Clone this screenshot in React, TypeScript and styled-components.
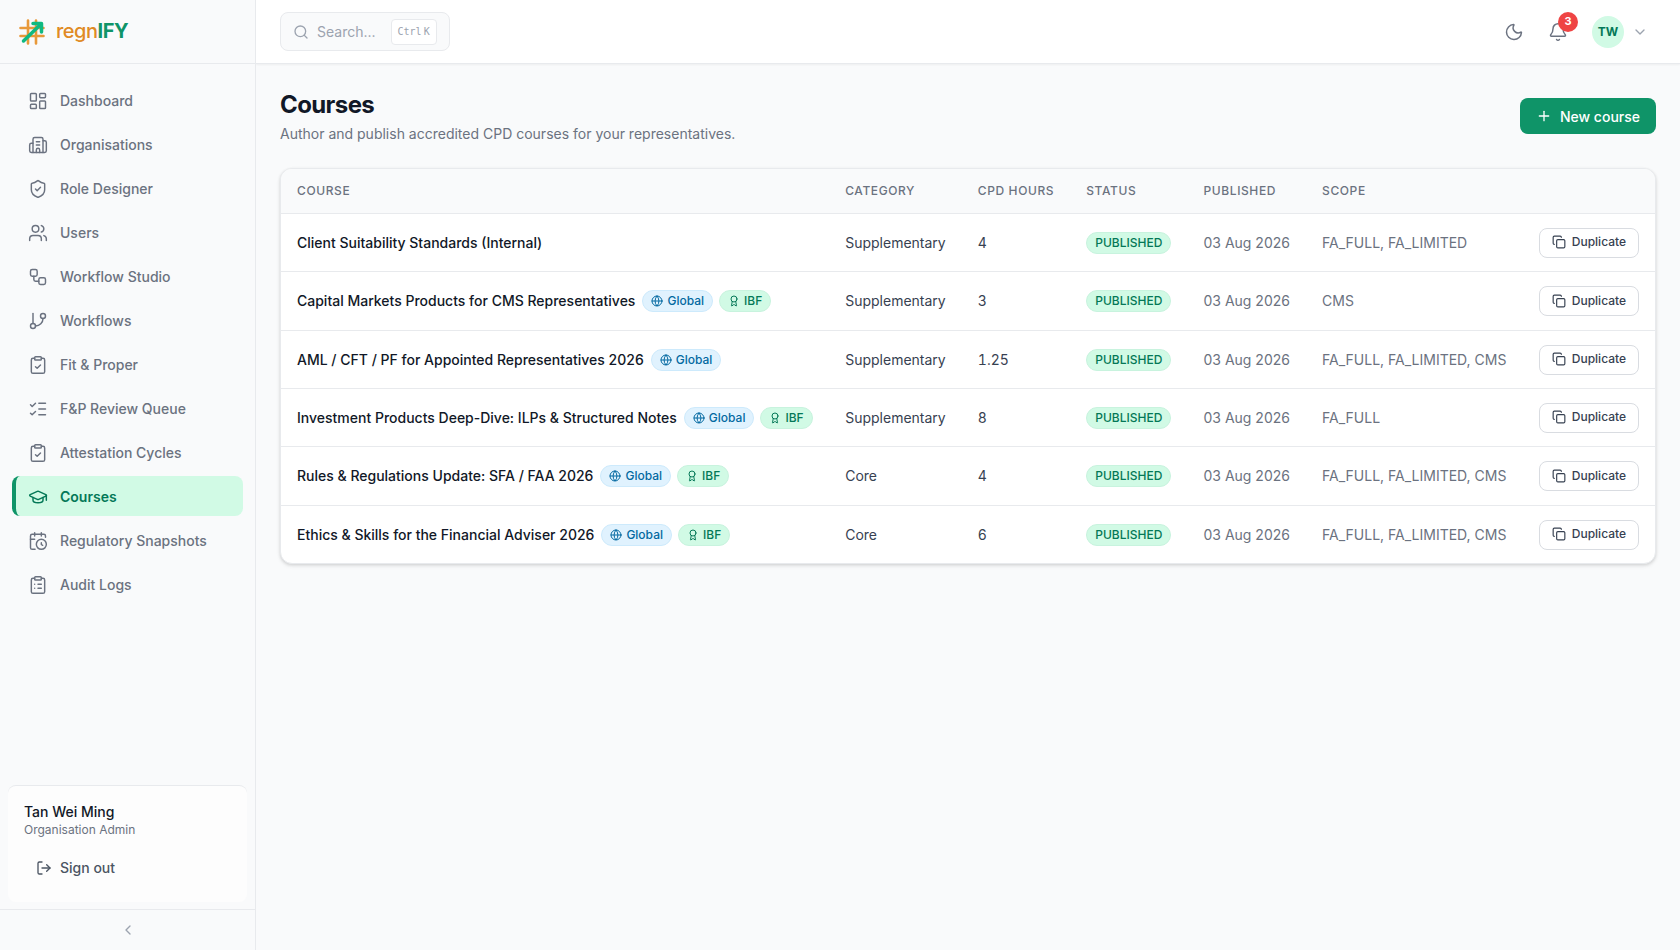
import React from "react";
import styled, { createGlobalStyle, css } from "styled-components";
import {
  Award,
  Bell,
  Building2,
  CalendarClock,
  ChevronDown,
  ChevronLeft,
  ClipboardCheck,
  ClipboardList,
  Copy,
  GitBranch,
  Globe,
  GraduationCap,
  LayoutDashboard,
  ListChecks,
  LogOut,
  Moon,
  Plus,
  Search,
  ShieldCheck,
  Users,
  Workflow,
  type LucideIcon,
} from "lucide-react";

const color = {
  page: "#f9fafb",
  surface: "#ffffff",
  line: "#e8eaed",
  lineStrong: "#d9dce1",
  ink: "#111827",
  body: "#374151",
  muted: "#6b7280",
  faint: "#9ca3af",
  brand: "#0f9468",
  brandDark: "#047857",
  brandSoft: "#d1fae5",
  amber: "#e08a24",
};

const GlobalStyle = createGlobalStyle`
  *, *::before, *::after { box-sizing: border-box; }
  body {
    margin: 0;
    background: ${color.page};
    color: ${color.ink};
    font-family: Inter, "Liberation Sans", sans-serif;
    font-size: 14px;
    line-height: 20px;
  }
  button { font: inherit; cursor: pointer; }
  h1, p { margin: 0; }
`;

const Shell = styled.div`
  display: grid;
  grid-template-columns: 256px minmax(0, 1fr);
  min-height: 100vh;
`;

const Sidebar = styled.aside`
  display: flex;
  flex-direction: column;
  position: sticky;
  top: 0;
  height: 100vh;
  border-right: 1px solid ${color.line};
  background: ${color.page};
`;

const Brand = styled.a`
  display: flex;
  align-items: center;
  gap: 8px;
  height: 64px;
  padding: 0 16px;
  border-bottom: 1px solid ${color.line};
  color: ${color.amber};
  font-size: 20px;
  font-weight: 500;
  line-height: 29px;
  letter-spacing: -0.025em;
  text-decoration: none;
`;

const BrandStrong = styled.span`
  color: ${color.brand};
  font-weight: 700;
`;

const Nav = styled.nav`
  display: flex;
  flex: 1;
  flex-direction: column;
  gap: 4px;
  padding: 16px 12px;
  overflow-y: auto;
`;

const NavLink = styled.a<{ $active: boolean }>`
  display: flex;
  align-items: center;
  gap: 12px;
  height: 40px;
  flex-shrink: 0;
  padding: 1px 12px 0;
  border-left: 4px solid transparent;
  border-radius: 8px;
  color: ${color.muted};
  font-weight: 500;
  line-height: 21px;
  text-decoration: none;
  ${({ $active }) =>
    $active &&
    css`
      border-left-color: ${color.brand};
      background: ${color.brandSoft};
      color: ${color.brandDark};
      font-weight: 600;
    `}
`;

const UserCard = styled.section`
  margin: 8px 8px 7px;
  padding: 16px;
  border-top: 1px solid ${color.line};
  border-radius: 8px;
  background: #fdfdfd;
`;

const UserName = styled.p`
  font-weight: 500;
`;

const UserRole = styled.p`
  color: ${color.muted};
  font-size: 12px;
  line-height: 16px;
`;

const SignOut = styled.button`
  display: flex;
  align-items: center;
  gap: 8px;
  width: 100%;
  height: 36px;
  margin-top: 12px;
  padding: 0 12px;
  border: 0;
  border-radius: 8px;
  background: transparent;
  color: #4b5563;
  font-weight: 500;
`;

const Collapse = styled.button`
  display: flex;
  align-items: center;
  justify-content: center;
  height: 41px;
  border: 0;
  border-top: 1px solid ${color.line};
  background: transparent;
  color: ${color.faint};
`;

const TopBar = styled.header`
  display: flex;
  align-items: center;
  justify-content: space-between;
  height: 64px;
  padding: 0 24px;
  border-bottom: 1px solid ${color.line};
  background: ${color.surface};
  box-shadow: 0 1px 2px rgba(0, 0, 0, 0.05);
`;

const SearchButton = styled.button`
  display: flex;
  align-items: center;
  gap: 8px;
  height: 39px;
  padding: 0 12px;
  border: 1px solid ${color.line};
  border-radius: 8px;
  background: ${color.page};
  color: ${color.faint};
`;

const Shortcut = styled.kbd`
  display: flex;
  align-items: center;
  gap: 2px;
  height: 26px;
  margin-left: 7px;
  padding: 0 6px;
  border: 1px solid ${color.line};
  border-radius: 4px;
  background: ${color.surface};
  font-family: "DejaVu Sans Mono", "Liberation Mono", monospace;
  font-size: 10px;
  line-height: 16px;
`;

const Actions = styled.div`
  display: flex;
  align-items: center;
  gap: 8px;
`;

const IconButton = styled.button`
  display: flex;
  align-items: center;
  justify-content: center;
  position: relative;
  width: 36px;
  height: 36px;
  padding: 0;
  border: 0;
  border-radius: 8px;
  background: transparent;
  color: ${color.muted};
`;

const Count = styled.span`
  position: absolute;
  top: -2px;
  right: -2px;
  width: 20px;
  height: 20px;
  border-radius: 50%;
  background: #ef4444;
  color: #ffffff;
  font-size: 11px;
  font-weight: 700;
  line-height: 18px;
  text-align: center;
`;

const Account = styled.button`
  display: flex;
  align-items: center;
  gap: 8px;
  padding: 4px 8px;
  border: 0;
  border-radius: 8px;
  background: transparent;
  color: ${color.faint};
`;

const Avatar = styled.span`
  width: 32px;
  height: 32px;
  border-radius: 50%;
  background: ${color.brandSoft};
  color: ${color.brandDark};
  font-size: 12px;
  font-weight: 700;
  line-height: 32px;
  text-align: center;
`;

const Main = styled.main`
  padding: 24px;
`;

const PageHead = styled.div`
  display: flex;
  align-items: center;
  justify-content: space-between;
  margin-bottom: 24px;
`;

const Title = styled.h1`
  font-size: 24px;
  font-weight: 700;
  line-height: 34px;
  letter-spacing: -0.025em;
`;

const Subtitle = styled.p`
  margin-top: 2px;
  color: ${color.muted};
`;

const PrimaryButton = styled.button`
  display: flex;
  align-items: center;
  gap: 8px;
  height: 36px;
  padding: 0 16px;
  border: 0;
  border-radius: 8px;
  background: ${color.brand};
  color: #ffffff;
  font-weight: 500;
  line-height: 21px;
`;

const TableCard = styled.div`
  overflow: hidden;
  border: 1px solid ${color.line};
  border-radius: 12px;
  background: ${color.surface};
  box-shadow: 0 1px 3px rgba(0, 0, 0, 0.1), 0 2px 4px rgba(0, 0, 0, 0.08);
`;

const Table = styled.table`
  width: 100%;
  border-spacing: 0;
  white-space: nowrap;
`;

const HeadCell = styled.th`
  height: 45px;
  padding: 0 16px;
  border-bottom: 1px solid ${color.line};
  background: ${color.page};
  color: ${color.muted};
  font-size: 12px;
  font-weight: 500;
  letter-spacing: 0.05em;
  text-align: left;
  text-transform: uppercase;
`;

const Cell = styled.td<{ $tone?: "muted" }>`
  height: 58px;
  padding: 0 16px;
  color: ${({ $tone }) => ($tone === "muted" ? color.muted : color.body)};
  font-variant-numeric: ${({ $tone }) => ($tone === "muted" ? "normal" : "tabular-nums")};
`;

const Row = styled.tr`
  &:nth-child(3n + 2) ${Cell} {
    height: 59px;
  }
  &:not(:last-child) ${Cell} {
    border-bottom: 1px solid ${color.line};
  }
  &:last-child ${Cell} {
    height: 57px;
  }
`;

const CourseName = styled.div`
  display: flex;
  align-items: center;
  gap: 7px;
  color: ${color.ink};
  font-weight: 500;
  font-variant-numeric: normal;
`;

const Tags = styled.span`
  display: flex;
  gap: 6px;
`;

const Badge = styled.span<{ $tone: "green" | "blue" }>`
  display: inline-flex;
  align-items: center;
  gap: 4px;
  height: 22px;
  padding: 0 8px;
  border: 1px solid ${({ $tone }) => ($tone === "green" ? "#c8f3de" : "#cdeafc")};
  border-radius: 11px;
  background: ${({ $tone }) => ($tone === "green" ? color.brandSoft : "#e0f2fe")};
  color: ${({ $tone }) => ($tone === "green" ? color.brandDark : "#0369a1")};
  font-size: 12px;
  font-weight: 500;
  line-height: 16px;
  vertical-align: middle;
`;

const OutlineButton = styled.button`
  display: flex;
  align-items: center;
  gap: 6px;
  height: 30px;
  margin-left: auto;
  padding: 0 12px 1px;
  border: 1px solid ${color.lineStrong};
  border-radius: 8px;
  background: ${color.surface};
  color: ${color.body};
  font-size: 12px;
  font-weight: 500;
`;

const navItems: { label: string; icon: LucideIcon }[] = [
  { label: "Dashboard", icon: LayoutDashboard },
  { label: "Organisations", icon: Building2 },
  { label: "Role Designer", icon: ShieldCheck },
  { label: "Users", icon: Users },
  { label: "Workflow Studio", icon: Workflow },
  { label: "Workflows", icon: GitBranch },
  { label: "Fit & Proper", icon: ClipboardCheck },
  { label: "F&P Review Queue", icon: ListChecks },
  { label: "Attestation Cycles", icon: ClipboardCheck },
  { label: "Courses", icon: GraduationCap },
  { label: "Regulatory Snapshots", icon: CalendarClock },
  { label: "Audit Logs", icon: ClipboardList },
];

interface Course {
  name: string;
  global?: boolean;
  ibf?: boolean;
  category: string;
  hours: string;
  scope: string;
}

const courses: Course[] = [
  { name: "Client Suitability Standards (Internal)", category: "Supplementary", hours: "4", scope: "FA_FULL, FA_LIMITED" },
  { name: "Capital Markets Products for CMS Representatives", global: true, ibf: true, category: "Supplementary", hours: "3", scope: "CMS" },
  { name: "AML / CFT / PF for Appointed Representatives 2026", global: true, category: "Supplementary", hours: "1.25", scope: "FA_FULL, FA_LIMITED, CMS" },
  { name: "Investment Products Deep-Dive: ILPs & Structured Notes", global: true, ibf: true, category: "Supplementary", hours: "8", scope: "FA_FULL" },
  { name: "Rules & Regulations Update: SFA / FAA 2026", global: true, ibf: true, category: "Core", hours: "4", scope: "FA_FULL, FA_LIMITED, CMS" },
  { name: "Ethics & Skills for the Financial Adviser 2026", global: true, ibf: true, category: "Core", hours: "6", scope: "FA_FULL, FA_LIMITED, CMS" },
];

function Logo() {
  return (
    <svg width="32" height="32" viewBox="0 0 32 32" fill="none" strokeLinecap="round" aria-hidden="true">
      <path d="M12 4.5v23M20 4.5v23M4.5 12h23M4.5 20h23" stroke="#e8993a" strokeWidth="2.6" />
      <path d="M7.5 25L25 8" stroke="#10b981" strokeWidth="3.5" />
      <path d="M17 7.5h8.5V16" stroke="#10b981" strokeWidth="3.5" strokeLinejoin="round" />
    </svg>
  );
}

export default function App() {
  return (
    <>
      <GlobalStyle />
      <Shell>
        <Sidebar>
          <Brand href="#">
            <Logo />
            <span>
              regn<BrandStrong>IFY</BrandStrong>
            </span>
          </Brand>
          <Nav aria-label="Main">
            {navItems.map(({ label, icon: Icon }) => (
              <NavLink
                key={label}
                href="#"
                $active={label === "Courses"}
                aria-current={label === "Courses" ? "page" : undefined}
              >
                <Icon size={20} strokeWidth={1.75} />
                {label}
              </NavLink>
            ))}
          </Nav>
          <UserCard>
            <UserName>Tan Wei Ming</UserName>
            <UserRole>Organisation Admin</UserRole>
            <SignOut type="button">
              <LogOut size={16} />
              Sign out
            </SignOut>
          </UserCard>
          <Collapse type="button" aria-label="Collapse sidebar">
            <ChevronLeft size={16} />
          </Collapse>
        </Sidebar>
        <div>
          <TopBar>
            <SearchButton type="button">
              <Search size={16} />
              Search...
              <Shortcut>
                <span>Ctrl</span>
                <span>K</span>
              </Shortcut>
            </SearchButton>
            <Actions>
              <IconButton type="button" aria-label="Toggle theme">
                <Moon size={20} strokeWidth={1.75} />
              </IconButton>
              <IconButton type="button" aria-label="Notifications">
                <Bell size={20} strokeWidth={1.75} />
                <Count>3</Count>
              </IconButton>
              <Account type="button" aria-label="Account menu">
                <Avatar>TW</Avatar>
                <ChevronDown size={16} />
              </Account>
            </Actions>
          </TopBar>
          <Main>
            <PageHead>
              <div>
                <Title>Courses</Title>
                <Subtitle>Author and publish accredited CPD courses for your representatives.</Subtitle>
              </div>
              <PrimaryButton type="button">
                <Plus size={16} />
                New course
              </PrimaryButton>
            </PageHead>
            <TableCard>
              <Table>
                <thead>
                  <tr>
                    <HeadCell scope="col">Course</HeadCell>
                    <HeadCell scope="col">Category</HeadCell>
                    <HeadCell scope="col">CPD hours</HeadCell>
                    <HeadCell scope="col">Status</HeadCell>
                    <HeadCell scope="col">Published</HeadCell>
                    <HeadCell scope="col">Scope</HeadCell>
                    <HeadCell scope="col" aria-label="Actions" />
                  </tr>
                </thead>
                <tbody>
                  {courses.map((course) => (
                    <Row key={course.name}>
                      <Cell>
                        <CourseName>
                          {course.name}
                          <Tags>
                            {course.global && (
                              <Badge $tone="blue">
                                <Globe size={12} />
                                Global
                              </Badge>
                            )}
                            {course.ibf && (
                              <Badge $tone="green">
                                <Award size={12} />
                                IBF
                              </Badge>
                            )}
                          </Tags>
                        </CourseName>
                      </Cell>
                      <Cell>{course.category}</Cell>
                      <Cell>{course.hours}</Cell>
                      <Cell>
                        <Badge $tone="green">PUBLISHED</Badge>
                      </Cell>
                      <Cell $tone="muted">03 Aug 2026</Cell>
                      <Cell $tone="muted">{course.scope}</Cell>
                      <Cell>
                        <OutlineButton type="button">
                          <Copy size={14} />
                          Duplicate
                        </OutlineButton>
                      </Cell>
                    </Row>
                  ))}
                </tbody>
              </Table>
            </TableCard>
          </Main>
        </div>
      </Shell>
    </>
  );
}
